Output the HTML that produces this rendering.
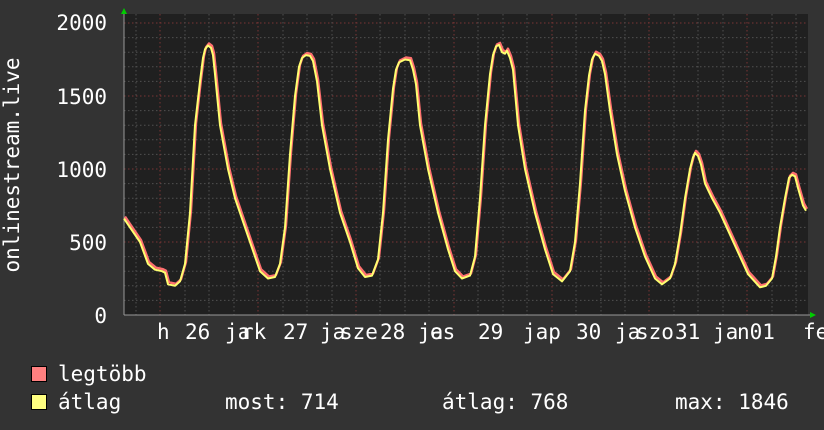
<!DOCTYPE html>
<html><head><meta charset="utf-8"><style>
html,body{margin:0;padding:0;background:#333333;}
svg{display:block}
text{font-family:"DejaVu Sans Mono","Liberation Mono",monospace;font-size:21px;fill:#fff}
</style></head><body>
<svg width="824" height="430" viewBox="0 0 824 430" xmlns="http://www.w3.org/2000/svg">
<rect width="824" height="430" fill="#333333"/>
<rect x="124" y="14" width="684" height="301" fill="#202020"/>
<g id="grid"></g>
<line x1="124" y1="315" x2="812" y2="315" stroke="#999" stroke-width="1"/>
<line x1="124" y1="10" x2="124" y2="315" stroke="#999" stroke-width="1"/>
<polygon points="121,14 127,14 124,8" fill="#00cc00"/>
<polygon points="810,312 810,318 816,315" fill="#00cc00"/>
<polyline id="red" fill="none" stroke="#ff7070" stroke-width="2.4" stroke-linejoin="round"/>
<polyline id="yel" fill="none" stroke="#ffff70" stroke-width="2" stroke-linejoin="round"/>
<text x="107" y="30" text-anchor="end">2000</text>
<text x="107" y="104" text-anchor="end">1500</text>
<text x="107" y="177" text-anchor="end">1000</text>
<text x="107" y="250" text-anchor="end">500</text>
<text x="107" y="323" text-anchor="end">0</text>
<text transform="translate(19,165) rotate(-90)" text-anchor="middle">onlinestream.live</text>
<text x="157" y="339">h</text>
<text x="185" y="339">26</text>
<text x="225" y="339">ja</text><text x="241" y="339">rk</text>
<text x="283" y="339">27</text>
<text x="320" y="339">ja</text><text x="340" y="339">sze</text>
<text x="380" y="339">28</text>
<text x="418" y="339">ja</text><text x="430" y="339">es</text>
<text x="478" y="339">29</text>
<text x="523" y="339">jap</text>
<text x="576" y="339">30</text>
<text x="615" y="339">ja</text><text x="636" y="339">szo</text>
<text x="675" y="339">31</text>
<text x="713" y="339">ja</text><text x="737" y="339">n01</text>
<text x="803" y="339">fe</text>
<rect x="31.5" y="366.5" width="15" height="15" fill="#ff8080" stroke="#000"/>
<rect x="31.5" y="394.5" width="15" height="15" fill="#ffff80" stroke="#000"/>
<text x="58" y="381">legtöbb</text>
<text x="58" y="409">átlag</text>
<text x="225" y="409">most: 714</text>
<text x="442" y="409">átlag: 768</text>
<text x="675" y="409">max: 1846</text>
</svg>
<script>
var g=document.getElementById('grid'),h='';
for(var v=100;v<=2000;v+=100){var y=315-v*0.146;var maj=v%500==0;
h+='<line x1="124" x2="808" y1="'+y+'" y2="'+y+'" stroke="'+(maj?'#7a3535':'#505050')+'" stroke-dasharray="1.5,2.5"/>';}
for(var x=136;x<808;x+=24.45){var dx=Math.round(x);var r=((x-160)%97.8+97.8)%97.8;var maj=r<3||r>94.8;
h+='<line y1="14" y2="315" x1="'+dx+'" x2="'+dx+'" stroke="'+(maj?'#7a3535':'#505050')+'" stroke-dasharray="1.5,2.5"/>';}
g.innerHTML=h;
var k=[124,660,130,600,140,500,148,350,155,310,162,300,165,290,168,210,175,200,180,230,185,350,190,700,195,1300,200,1600,203,1760,205,1820,208,1846,211,1830,213,1780,215,1650,220,1300,228,1000,235,800,245,600,255,400,260,300,268,250,275,260,280,350,285,600,290,1100,295,1500,299,1700,302,1760,306,1780,310,1775,313,1740,317,1600,322,1300,330,1000,340,700,350,500,358,320,365,260,372,270,378,380,383,700,388,1200,393,1550,396,1680,399,1730,405,1750,410,1745,413,1680,416,1580,420,1300,428,1000,438,700,448,450,455,300,462,250,470,270,475,400,480,800,485,1300,490,1650,493,1780,496,1840,499,1850,502,1800,505,1790,507,1810,510,1760,513,1680,518,1300,525,1000,535,700,545,450,553,280,562,230,570,300,575,500,580,900,585,1400,589,1640,592,1750,595,1790,599,1775,602,1740,605,1650,610,1400,617,1100,625,850,635,600,645,400,655,250,662,210,670,250,675,350,680,550,685,800,690,1000,693,1080,695,1110,698,1090,701,1030,705,900,712,800,720,700,730,550,740,400,748,280,760,190,766,200,772,250,776,400,780,600,785,800,789,940,792,960,795,950,798,870,803,750,806,714];
var a='',b='';
for(var i=0;i<k.length;i+=2){var y=315-k[i+1]*0.146;a+=k[i]+','+y.toFixed(1)+' ';b+=(k[i]+1)+','+(y-2).toFixed(1)+' ';}
document.getElementById('yel').setAttribute('points',a);
document.getElementById('red').setAttribute('points',b);
</script>
</body></html>
